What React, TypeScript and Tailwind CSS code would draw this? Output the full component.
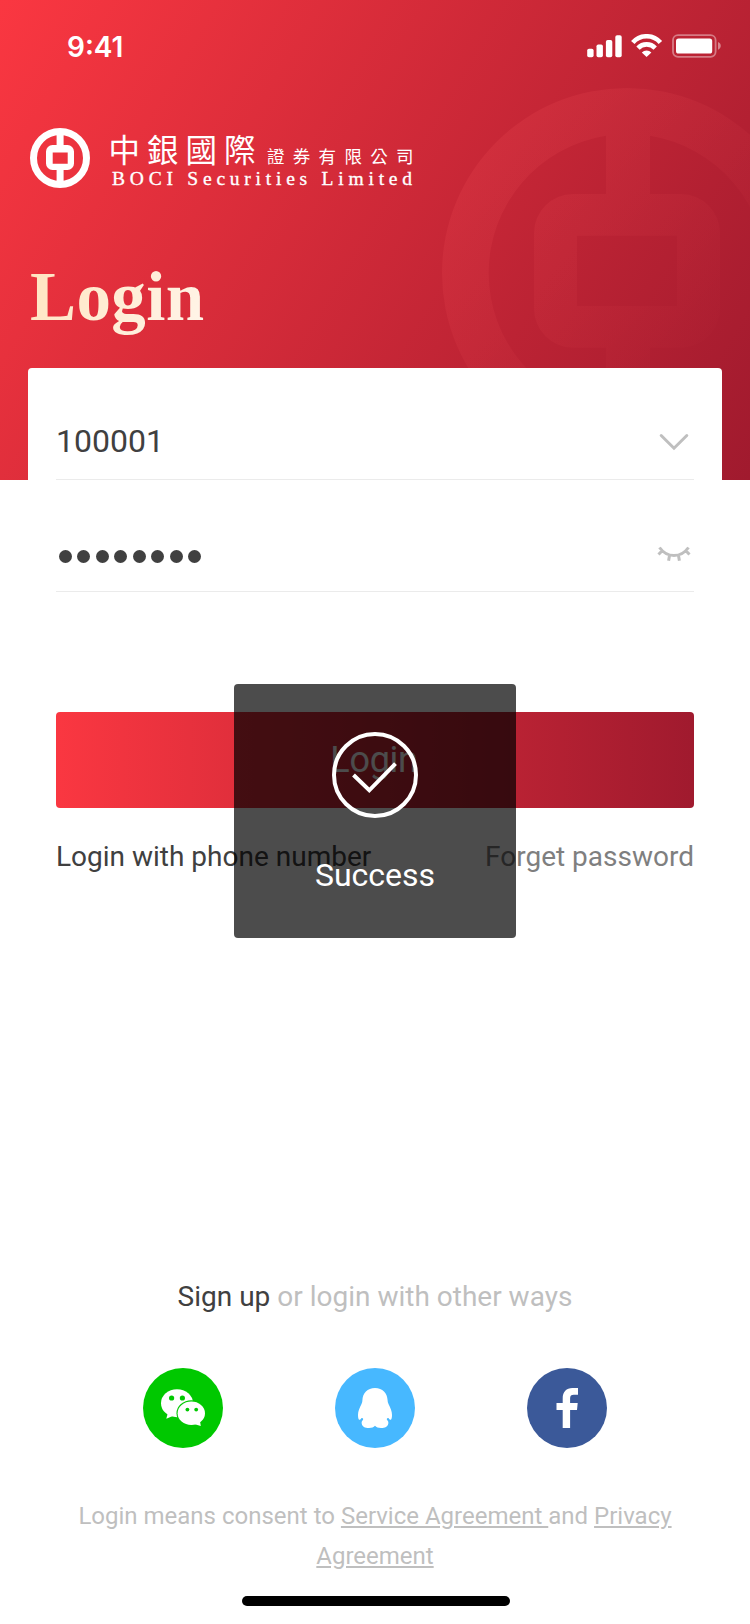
function StatusIcons() {
  return (
    <svg width="136" height="24" viewBox="586 34 136 24" fill="#fff" aria-hidden="true">
      <rect x="587.2" y="48.7" width="6.4" height="8.5" rx="1.8" />
      <rect x="596.5" y="44.4" width="6.4" height="12.8" rx="1.8" />
      <rect x="605.9" y="40" width="6.4" height="17.2" rx="1.8" />
      <rect x="615.3" y="35.2" width="6.4" height="22" rx="1.8" />
      <g fill="none" stroke="#fff" strokeWidth="4.6">
        <path d="M632.8 42.6a18.2 18.2 0 0 1 27.600 0" />
        <path d="M638 48.100a11.800 11.800 0 0 1 17.200 0" />
      </g>
      <path d="M641.8 52.4a7.2 7.2 0 0 1 9.6 0l-4.8 4.7z" />
      <rect x="673" y="35.2" width="42.6" height="21.6" rx="5" fill="none" stroke="#fff" strokeOpacity=".4" strokeWidth="1.8" />
      <rect x="676" y="38.5" width="36.2" height="15" rx="2.6" />
      <path d="M718 42c3.7 1.4 3.7 6.2 0 7.8z" fillOpacity=".45" />
    </svg>
  );
}

function BrandLogo() {
  return (
    <svg width="392" height="64" viewBox="28 126 392 64" fill="#fff" role="img" aria-label="BOCI Securities Limited">
      <circle cx="60" cy="158" r="26.5" fill="none" stroke="#fff" strokeWidth="7" />
      <path d="M56.6 132h7v14h-7zM56.6 169h7v15h-7z" />
      <path
        fillRule="evenodd"
        d="M52.5 145h15a6.5 6.5 0 0 1 6.5 6.5v12a6.5 6.5 0 0 1-6.5 6.5h-15a6.5 6.5 0 0 1-6.5-6.5v-12a6.5 6.5 0 0 1 6.5-6.5zM52.7 152.4v11.4h15v-11.4z"
      />
      <g className="font-['Noto_Sans_CJK_TC',sans-serif]">
        <text x="108.500" y="162" fontSize="31.500" textLength="147" lengthAdjust="spacing">中銀國際</text>
        <text x="267" y="163" fontSize="17.5" textLength="146.500" lengthAdjust="spacing">證券有限公司</text>
      </g>
      <text x="112" y="185.4" fontSize="19.5" textLength="300" lengthAdjust="spacing" stroke="#fff" strokeWidth=".35" className="font-['Liberation_Serif',serif]">
        BOCI Securities Limited
      </text>
    </svg>
  );
}

function Watermark() {
  return (
    <svg className="absolute right-0 top-0" width="330" height="480" viewBox="420 0 330 480" aria-hidden="true">
      <defs>
        <linearGradient id="mark" gradientUnits="userSpaceOnUse" x1="490" y1="140" x2="735" y2="360">
          <stop stopColor="#ff5a60" stopOpacity=".15" />
          <stop offset="1" stopColor="#ff5a60" stopOpacity="0" />
        </linearGradient>
      </defs>
      <path
        fill="url(#mark)"
        fillRule="evenodd"
        d="M627 88a185 185 0 1 1 0 370a185 185 0 1 1 0-370zM606 135.7A139 139 0 0 0 606 410.3V347.7H573a39 39 0 0 1-39-39V233a39 39 0 0 1 39-39H606zM650 135.8V194H681a39 39 0 0 1 39 39V308.7a39 39 0 0 1-39 39H650V410.2A139 139 0 0 0 650 135.8zM577 235.7V306h100v-70.3z"
      />
    </svg>
  );
}

function WechatIcon() {
  return (
    <svg width="80" height="80" viewBox="0 0 80 80" fill="#fff" aria-hidden="true">
      <ellipse cx="34" cy="35.2" rx="16" ry="14" />
      <path d="M25 44.5 23.3 50.8 31 47.500z" />
      <circle cx="28.6" cy="30" r="2.6" fill="#00c800" />
      <circle cx="39.4" cy="30" r="2.6" fill="#00c800" />
      <ellipse cx="48.3" cy="45.3" rx="14.8" ry="13" fill="#00c800" />
      <ellipse cx="48.3" cy="45.3" rx="13.7" ry="11.7" />
      <path d="M51 56 57.8 58 56.800 52z" />
      <circle cx="44.4" cy="41.6" r="1.9" fill="#00c800" />
      <circle cx="53.2" cy="41.6" r="1.9" fill="#00c800" />
    </svg>
  );
}

function QqIcon() {
  return (
    <svg width="80" height="80" viewBox="0 0 80 80" fill="#fff" aria-hidden="true">
      <path d="M40 20C47.600 20 52.300 25.200 52.600 32.200Q52.600 34.500 53.500 36C55.600 40 57 43.500 57 47C57 49.800 56.400 51.800 55.600 51.800C54.800 51.800 54 50.900 53.500 50C51.900 49.600 51.300 51.200 52.300 52.300C53.300 53.200 53.500 54.200 53.300 55.400C52.900 58.300 50 60 46 60C43.200 60 41.400 59.300 40 57.800C38.600 59.300 36.800 60 34 60C30 60 27.100 58.300 26.700 55.400C26.500 54.200 26.700 53.200 27.700 52.300C28.700 51.200 28.100 49.600 26.500 50C26 50.900 25.200 51.800 24.400 51.800C23.600 51.800 23 49.800 23 47C23 43.500 24.400 40 26.500 36Q27.400 34.500 27.400 32.200C27.700 25.200 32.400 20 40 20Z" />
    </svg>
  );
}

function FacebookIcon() {
  return (
    <svg width="80" height="80" viewBox="0 0 80 80" fill="#fff" aria-hidden="true">
      <path d="M35.700 60V42H29.500V35h6.200V30.400c0-6.700 3.700-10.400 9.700-10.400H51v6.800h-4.200c-2.600 0-3.700 1.100-3.700 3.600V35h7.600l-.7 7h-6.900v18z" />
    </svg>
  );
}

const passwordDots = Array.from({ length: 8 }, (_, i) => i);

export default function App() {
  return (
    <div className="relative flex h-[1624px] w-[750px] flex-col overflow-hidden bg-white font-[Roboto,sans-serif] text-[#404040]">
      <header className="relative h-[480px] shrink-0 bg-[linear-gradient(121deg,#fa3741_0%,#a01a2e_100%)]">
        <Watermark />
        <div className="flex h-[92px] items-center justify-between pl-[67px] pr-[28px]">
          <span className="pt-[2px] font-[Inter,sans-serif] text-[28px] font-semibold leading-none text-white">9:41</span>
          <StatusIcons />
        </div>
        <div className="mt-[34px] flex h-16 pl-7">
          <BrandLogo />
        </div>
        <h1 className="ml-[30px] mt-[67px] w-fit bg-[linear-gradient(120deg,#ffe4bf,#fff5ea)] bg-clip-text font-['Liberation_Serif',serif] text-[69px] font-bold leading-[80px] tracking-[0.4px] text-transparent">
          Login
        </h1>
      </header>

      <main className="relative mx-7 -mt-28 flex flex-col rounded-t bg-white px-7">
        <div className="flex h-28 items-center justify-between border-b border-[#ebebeb] pt-[35px] text-[32px] leading-none">
          <span>100001</span>
          <svg className="mr-[5px] mt-px" width="30" height="18" viewBox="0 0 30 18" fill="none" stroke="#bfbfbf" strokeWidth="3" strokeLinecap="round" aria-hidden="true">
            <path d="M2.200 2.500 15 15.200 27.800 2.500" />
          </svg>
        </div>
        <div className="flex h-28 items-center justify-between border-b border-[#ebebeb] pt-[41px]">
          <div className="ml-[3px] flex gap-[5.45px]" aria-label="Password">
            {passwordDots.map((i) => (
              <span key={i} className="size-[13px] rounded-full bg-[#404040]" />
            ))}
          </div>
          <svg className="mb-1 mr-[3px]" width="34" height="16" viewBox="0 0 34 16" fill="none" stroke="#bfbfbf" strokeWidth="3" aria-hidden="true">
            <path d="M2.500 1.500C10 12.200 24 12.200 31.500 1.500M1.500 8.500 5.400 4.500M32.500 8.500 28.600 4.500M12.500 9.500 11.600 14.700M21.500 9.500 22.400 14.700" />
          </svg>
        </div>
        <button className="mt-[120px] h-24 rounded bg-[linear-gradient(90deg,#fa3741,#a01a2e)] pr-[2px] text-[36px] leading-none tracking-[-0.3px] text-white">
          Login
        </button>
        <div className="mt-[33px] flex justify-between text-[28px] leading-8">
          <span>Login with phone number</span>
          <span className="text-[#7f7f7f]">Forget password</span>
        </div>
      </main>

      <footer className="mt-auto flex flex-col items-center pb-[18px]">
        <p className="text-[28px] leading-8 text-[#bfbfbf]">
          <span className="text-[#404040]">Sign up</span> or login with other ways
        </p>
        <div className="mt-[55px] flex gap-28">
          <span className="size-20 rounded-full bg-[#00c800]"><WechatIcon /></span>
          <span className="size-20 rounded-full bg-[#47b8ff]"><QqIcon /></span>
          <span className="size-20 rounded-full bg-[#3b5999]"><FacebookIcon /></span>
        </div>
        <p className="mt-12 w-[638px] text-center text-[24px] leading-10 text-[#bfbfbf]">
          Login means consent to <span className="underline">Service Agreement </span>and{" "}
          <span className="underline">Privacy Agreement</span>
        </p>
        <div className="ml-[2px] mt-5 h-[10px] w-[268px] rounded-full bg-black" />
      </footer>

      <div className="absolute left-[234px] top-[684px] flex h-[254px] w-[282px] flex-col items-center rounded bg-black/70 pt-12 text-white">
        <svg width="86" height="86" viewBox="0 0 86 86" fill="none" stroke="#fff" strokeWidth="4" aria-hidden="true">
          <circle cx="43" cy="43" r="41" />
          <path d="M21.500 43 37.300 58.300 63.500 31.700" />
        </svg>
        <span className="mt-[41px] text-[32px] leading-8">Success</span>
      </div>
    </div>
  );
}
